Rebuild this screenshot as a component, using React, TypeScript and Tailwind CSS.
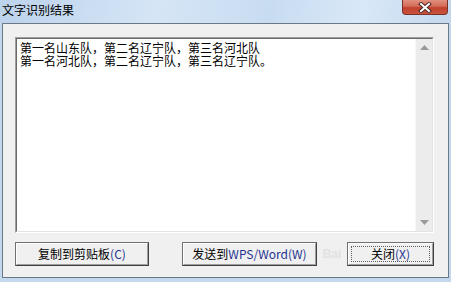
import React from "react";

const cjk = { fontFamily: '"Noto Sans CJK SC", "Noto Sans", sans-serif' };

function Btn({ w, children, focus }: { w: string; children: React.ReactNode; focus?: boolean }) {
  return (
    <div className={`${w} h-[24px] border border-[#707070] border-b-[#404040] border-r-[#404040] bg-[#f0f0f0]`}>
      <div className="relative h-full border border-t-white border-l-white border-b-[#a0a0a0] border-r-[#a0a0a0] flex items-center justify-center text-[12px] leading-none text-black">
        {focus && <div className="absolute inset-[2px] border border-dotted border-[#606060]" />}
        <span className="relative">{children}</span>
      </div>
    </div>
  );
}

export default function App() {
  return (
    <div className="w-[451px] h-[282px] flex flex-col bg-[#c4d9ef] overflow-hidden" style={cjk}>
      {/* title bar */}
      <div className="h-[23px] flex items-start bg-[linear-gradient(100deg,#bcd3ec_0%,#d5e5f6_35%,#c8dcf1_60%,#d9e8f8_80%,#c3d8ee_100%)] relative">
        <span className="ml-[2px] mt-[2px] text-[12px] leading-[16px] text-black">文字识别结果</span>
        <div className="absolute left-[402px] top-0 w-[46px] h-[15px] rounded-b-[4px] border border-t-0 border-[#7a3128] bg-[linear-gradient(180deg,#e1907f_0%,#d46a58_45%,#c0402c_55%,#c8553f_100%)] flex items-center justify-center">
          <svg width="14" height="11" viewBox="0 0 14 11">
            <path d="M3 2 L11 9 M11 2 L3 9" stroke="#4a2a26" strokeWidth="4" strokeLinecap="square" />
            <path d="M3 2 L11 9 M11 2 L3 9" stroke="#ffffff" strokeWidth="2" strokeLinecap="square" />
          </svg>
        </div>
      </div>
      {/* client */}
      <div className="relative ml-[2px] mr-[2px] mb-[4px] flex-1 border border-[#6b7888] bg-[#f0f0f0] flex flex-col pl-[12px] pr-[14px] pt-[13px]">
        <div className="h-[196px] border border-t-[#a0a0a0] border-l-[#a0a0a0] border-b-white border-r-white">
          <div className="h-full border border-t-[#696969] border-l-[#696969] border-b-[#e3e3e3] border-r-[#e3e3e3] bg-white flex">
            <div className="flex-1 pl-[3px] pt-[2px] text-[12px] leading-[13px] text-black">
              <div className="h-[13px]">第一名山东队，第二名辽宁队，第三名河北队</div>
              <div className="h-[13px]">第一名河北队，第二名辽宁队，第三名辽宁队。</div>
            </div>
            <div className="w-[17px] h-full bg-[#ececec] border-l border-[#f7f7f7] flex flex-col justify-between items-center py-[6px]">
              <svg width="9" height="5" viewBox="0 0 9 5"><path d="M4.5 0 L9 5 L0 5 Z" fill="#9a9a9a" /></svg>
              <svg width="9" height="5" viewBox="0 0 9 5"><path d="M0 0 L9 0 L4.5 5 Z" fill="#9a9a9a" /></svg>
            </div>
          </div>
        </div>
        <div className="flex mt-[9px]">
          <Btn w="w-[134px]">复制到剪贴板<span className="text-[#1f3590]">(C)</span></Btn>
          <div className="w-[33px]" />
          <Btn w="w-[135px]">发送到<span className="text-[#1f3590]">WPS/Word(W)</span></Btn>
          <div className="w-[30px] flex items-center justify-center">
            <span className="text-[12px] font-bold leading-none text-[#e2e2e2] select-none" style={{ fontFamily: '"Liberation Sans", sans-serif' }}>Bai</span>
          </div>
          <Btn w="w-[87px]" focus>关闭<span className="text-[#1f3590]">(X)</span></Btn>
        </div>
      </div>
    </div>
  );
}
